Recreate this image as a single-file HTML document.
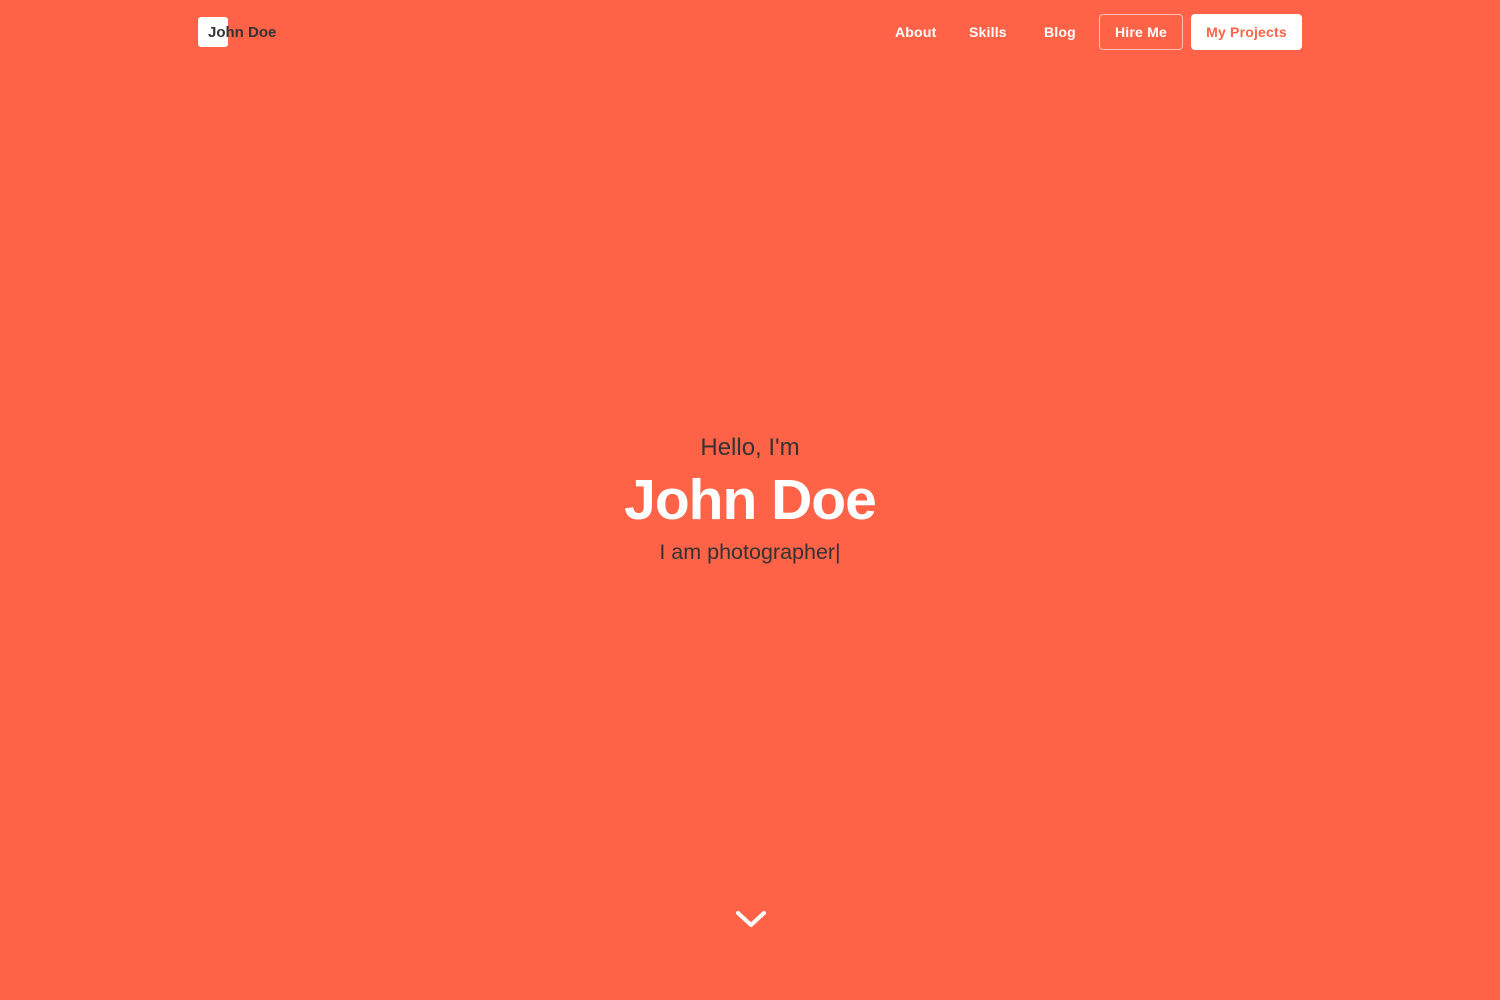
<!DOCTYPE html>
<html><head><meta charset="utf-8"><style>
html,body{margin:0;padding:0;width:1500px;height:1000px;overflow:hidden;background:#ff6347;font-family:"Liberation Sans",Arial,sans-serif}
.logo{position:absolute;left:198px;top:17px;width:30px;height:30px;background:#fff;border-radius:3px}
.logotext{position:absolute;left:208px;top:23px;font-size:15px;font-weight:bold;color:#333;line-height:20px}
.nav a{position:absolute;top:23px;font-size:14px;font-weight:bold;color:#fff;line-height:18px;letter-spacing:.2px}
.btn{position:absolute;top:14px;height:36px;box-sizing:border-box;border-radius:4px;font-size:14px;font-weight:bold;line-height:34px;text-align:center;letter-spacing:.2px}
.hire{left:1099px;width:84px;border:1px solid rgba(255,255,255,.6);color:#fff}
.proj{left:1191px;width:111px;background:#fff;color:#ff6347;line-height:36px}
.c{position:absolute;left:0;width:1500px;text-align:center}
</style></head><body>
<div class="logo"></div><div class="logotext">John Doe</div>
<div class="nav"><a style="left:895px">About</a><a style="left:969px">Skills</a><a style="left:1044px">Blog</a></div>
<div class="btn hire">Hire Me</div>
<div class="btn proj">My Projects</div>
<div class="c" style="top:433px;font-size:24px;color:#333;line-height:30px">Hello, I'm</div>
<div class="c" style="top:467px;font-size:57px;font-weight:bold;color:#fff;line-height:66px;letter-spacing:-1px">John Doe</div>
<div class="c" style="top:539px;font-size:21.5px;color:#333;line-height:26px">I am photographer|</div>
<svg style="position:absolute;left:735px;top:910px" width="32" height="20" viewBox="0 0 32 20"><path d="M3 3 L16 15 L29 3" fill="none" stroke="#fff" stroke-width="4" stroke-linecap="round" stroke-linejoin="round"/></svg>
</body></html>
